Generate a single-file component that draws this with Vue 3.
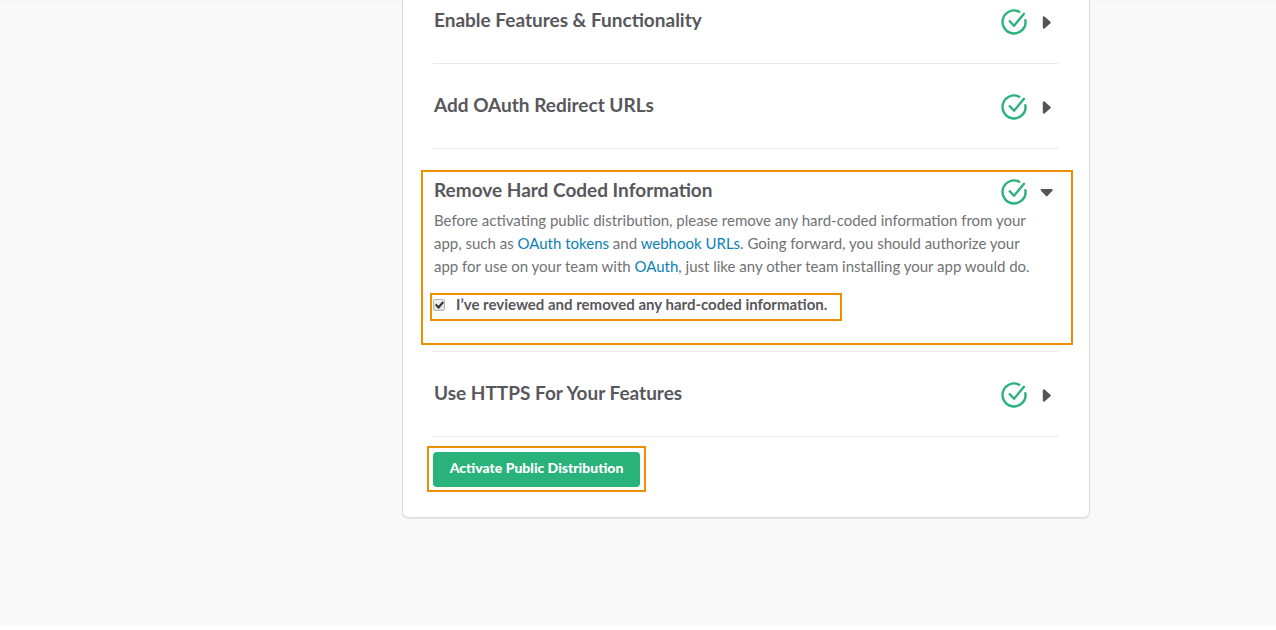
<script setup>
import { ref } from 'vue'

const sections = ref([
  { id: 'features', title: 'Enable Features & Functionality', open: false },
  { id: 'redirect', title: 'Add OAuth Redirect URLs', open: false },
  { id: 'hardcoded', title: 'Remove Hard Coded Information', open: true },
  { id: 'https', title: 'Use HTTPS For Your Features', open: false },
])
const reviewed = ref(true)
</script>

<template>
  <div class="page">
    <main class="card">
      <section v-for="s in sections" :key="s.id" class="item" :class="{ open: s.open }">
        <div class="head">
          <h2>{{ s.title }}</h2>
          <svg class="check" viewBox="0 0 26 26" aria-hidden="true">
            <path d="M18.2 2.7A11.5 11.5 0 1 0 24.4 11.2" />
            <path d="M8.8 12.2L13 16.8L23 4.8" />
          </svg>
          <button
            class="toggle"
            type="button"
            :aria-expanded="s.open"
            :aria-label="s.title"
            @click="s.open = !s.open"
          >
            <svg v-if="s.open" viewBox="0 0 14 14" aria-hidden="true">
              <path d="M1.7 5H11.7L6.7 10.4Z" />
            </svg>
            <svg v-else viewBox="0 0 14 14" aria-hidden="true">
              <path d="M3.8 2.2V12.8L9.8 7.5Z" />
            </svg>
          </button>
        </div>
        <div v-if="s.id === 'hardcoded' && s.open" class="body">
          <p>
            Before activating public distribution, please remove any hard-coded information from your
            app, such as <a href="#tokens">OAuth tokens</a> and <a href="#webhooks">webhook URLs</a>.
            Going forward, you should authorize your app for use on your team with
            <a href="#oauth">OAuth</a>, just like any other team installing your app would do.
          </p>
          <label class="confirm">
            <input v-model="reviewed" type="checkbox" />
            <span>I’ve reviewed and removed any hard-coded information.</span>
          </label>
        </div>
      </section>
      <div class="action">
        <button class="activate" type="button">Activate Public Distribution</button>
      </div>
    </main>
  </div>
</template>

<style>
body {
  background: #fff;
}
</style>

<style scoped>
.page {
  display: grid;
  grid-template-columns: 402fr 688fr 186fr;
  padding-bottom: 107px;
  background: #f9f9f9;
  box-shadow: inset 0 1px #f4f4f4;
  font-family: Lato, "Liberation Sans", sans-serif;
  font-size: 15px;
  line-height: 23px;
  color: #717274;
}
.card {
  grid-column: 2;
  box-sizing: border-box;
  padding: 0 31px 30px 30px;
  background: #fff;
  border: 1px solid #dcdcdc;
  border-top: 0;
  border-radius: 0 0 6px 6px;
  box-shadow: 0 1px 1px rgba(0, 0, 0, 0.08);
}
.item {
  position: relative;
  padding: 29px 0 31px;
  border-bottom: 1px solid #e8e8e8;
}
.item:first-child {
  padding-top: 8px;
}
.head {
  display: flex;
  align-items: center;
  height: 24px;
  padding-left: 1px;
}
h2 {
  flex: 1;
  margin: 0;
  font-size: 19px;
  font-weight: 700;
  line-height: 24px;
  color: #58575c;
}
.check {
  width: 26px;
  height: 26px;
  margin: 4px 13px 0 0;
  fill: none;
  stroke: #2ab27b;
  stroke-width: 2.4;
  stroke-linecap: round;
  stroke-linejoin: round;
}
.toggle {
  display: flex;
  margin: 4px 4px 0 0;
  padding: 0;
  border: 0;
  background: none;
  cursor: pointer;
}
.toggle svg {
  width: 14px;
  height: 14px;
  fill: #555459;
  stroke: #555459;
  stroke-width: 2;
  stroke-linejoin: round;
}
.body {
  padding: 7px 0 4px;
}
p {
  margin: 0 0 15px;
  padding: 0 16px 0 1px;
}
a {
  color: #0b80b5;
  text-decoration: none;
}
.open::after {
  content: "";
  position: absolute;
  inset: 21px -15px 6px -12px;
  border: 2px solid #ee8f00;
  pointer-events: none;
}
.confirm {
  position: relative;
  display: inline-flex;
  align-items: center;
  font-weight: 700;
  color: #58575c;
  vertical-align: top;
}
.confirm::after {
  content: "";
  position: absolute;
  inset: 0 -15px -5px -3px;
  border: 2px solid #ee8f00;
  pointer-events: none;
}
.confirm input {
  appearance: none;
  display: grid;
  place-items: center;
  width: 12px;
  height: 12px;
  margin: 0 11px 0 0;
  border: 1px solid #b4b4b4;
  border-radius: 2px;
  background: linear-gradient(#f0f0f0, #dedede);
}
.confirm input:checked::before {
  content: "";
  width: 3px;
  height: 6px;
  margin-bottom: 2px;
  border: solid #333;
  border-width: 0 2px 2px 0;
  transform: rotate(42deg);
}
.action {
  position: relative;
  width: fit-content;
  margin-top: 15px;
}
.action::after {
  content: "";
  position: absolute;
  inset: -6px -6px -5px;
  border: 2px solid #ee8f00;
  pointer-events: none;
}
.activate {
  display: block;
  min-width: 207px;
  height: 35px;
  padding: 0 12px 3px;
  border: 0;
  border-radius: 4px;
  background: #2ab27b;
  color: #fff;
  font: 900 14px/20px Lato, "Liberation Sans", sans-serif;
  cursor: pointer;
}
</style>
